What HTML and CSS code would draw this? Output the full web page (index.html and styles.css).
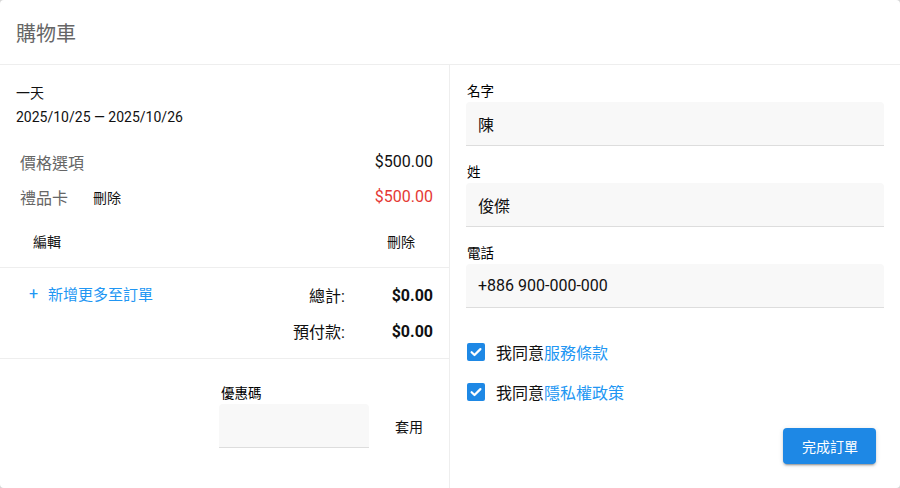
FILE: index.html
```html
<!DOCTYPE html>
<html lang="zh-Hant">
<head>
    <meta charset="UTF-8">
    <meta name="viewport" content="width=device-width, initial-scale=1.0">
    <title>購物車</title>
    <link rel="stylesheet" href="styles.css">
</head>
<body>
    <div class="cart">
        <header class="cart-header">購物車</header>
        <div class="cart-body">
            <section class="order">
                <div class="order-summary">
                    <p class="order-title">一天</p>
                    <p class="order-dates">2025/10/25 — 2025/10/26</p>
                    <div class="line">
                        <span class="line-name">價格選項</span>
                        <span class="line-price">$500.00</span>
                    </div>
                    <div class="line">
                        <span class="line-name">禮品卡</span>
                        <a href="#" class="line-remove">刪除</a>
                        <span class="line-price discount">$500.00</span>
                    </div>
                    <div class="order-actions">
                        <button class="text-btn">編輯</button>
                        <button class="text-btn">刪除</button>
                    </div>
                </div>
                <div class="order-totals">
                    <a href="#" class="add-more"><span class="plus">+</span>新增更多至訂單</a>
                    <div class="totals">
                        <span class="totals-label">總計:</span>
                        <span class="totals-value">$0.00</span>
                        <span class="totals-label">預付款:</span>
                        <span class="totals-value">$0.00</span>
                    </div>
                </div>
                <div class="coupon">
                    <label class="coupon-field">
                        <span class="field-label">優惠碼</span>
                        <input type="text" class="input coupon-input">
                    </label>
                    <button class="text-btn">套用</button>
                </div>
            </section>
            <section class="customer">
                <label class="field">
                    <span class="field-label">名字</span>
                    <input type="text" class="input" value="陳">
                </label>
                <label class="field">
                    <span class="field-label">姓</span>
                    <input type="text" class="input" value="俊傑">
                </label>
                <label class="field">
                    <span class="field-label">電話</span>
                    <input type="text" class="input" value="+886 900-000-000">
                </label>
                <div class="agreements">
                    <label class="check">
                        <span class="check-box">
                            <svg viewBox="0 0 18 18" width="18" height="18"><path d="M4.6 9.2l2.9 2.8 5.9-5.9" fill="none" stroke="#fff" stroke-width="2.2" stroke-linecap="round" stroke-linejoin="round"/></svg>
                        </span>
                        我同意<a href="#">服務條款</a>
                    </label>
                    <label class="check">
                        <span class="check-box">
                            <svg viewBox="0 0 18 18" width="18" height="18"><path d="M4.6 9.2l2.9 2.8 5.9-5.9" fill="none" stroke="#fff" stroke-width="2.2" stroke-linecap="round" stroke-linejoin="round"/></svg>
                        </span>
                        我同意<a href="#">隱私權政策</a>
                    </label>
                </div>
                <div class="submit-row">
                    <button class="submit">完成訂單</button>
                </div>
            </section>
        </div>
    </div>
</body>
</html>
```

FILE: styles.css
```css
html {
    box-sizing: border-box;
    font-family: Roboto, "Noto Sans CJK TC", sans-serif;
    font-size: 14px;
}

*,
*:before,
*:after {
    box-sizing: inherit;
}

body {
    margin: 0;
    height: 100vh;
    background-color: #d6d6d6;
    color: #111;
}

p {
    margin: 0;
}

a {
    color: #2196f3;
    text-decoration: none;
}

button {
    font-family: inherit;
    border: 0;
    background: none;
    cursor: pointer;
}

.cart {
    height: 100%;
    display: flex;
    flex-direction: column;
    background-color: #fff;
    border-radius: 4px;
    overflow: hidden;
}

.cart-header {
    height: 65px;
    flex-shrink: 0;
    display: flex;
    align-items: center;
    padding: 0 16px;
    font-size: 20px;
    color: #666;
    border-bottom: 1px solid #eee;
}

.cart-body {
    flex-grow: 1;
    display: flex;
}

.order {
    width: 450px;
    border-right: 1px solid #eee;
}

.order-summary {
    padding: 16px 16px 8px;
    border-bottom: 1px solid #eee;
}

.order-title,
.order-dates {
    line-height: 24px;
    font-size: 14px;
}

.line {
    display: flex;
    align-items: center;
    height: 35px;
    padding-left: 4px;
    font-size: 16px;
}

.line:first-of-type {
    margin-top: 15px;
}

.line-name {
    color: #666;
}

.line-remove {
    color: #111;
    font-size: 14px;
    margin-left: 25px;
}

.line-price {
    margin-left: auto;
}

.discount {
    color: #e53935;
}

.order-actions {
    display: flex;
    justify-content: space-between;
    margin-top: 9px;
    padding: 0 2px 0 1px;
}

.text-btn {
    height: 36px;
    padding: 0 16px;
    font-size: 14px;
    color: #111;
}

.order-totals {
    display: flex;
    justify-content: space-between;
    padding: 9px 16px;
    border-bottom: 1px solid #eee;
}

.add-more {
    height: 36px;
    display: flex;
    align-items: center;
    padding-left: 13px;
    font-size: 15px;
    margin-top: -2px;
}

.plus {
    font-size: 16px;
    margin-right: 10px;
}

.totals {
    display: grid;
    grid-template-columns: auto 88px;
    grid-auto-rows: 36px;
    align-items: center;
    font-size: 16px;
}

.totals-label {
    text-align: right;
}

.totals-value {
    text-align: right;
    font-weight: 700;
}

.coupon {
    display: flex;
    justify-content: flex-end;
    align-items: flex-end;
    gap: 16px;
    padding: 24px 16px 0;
}

.coupon .text-btn {
    height: 44px;
    padding: 0 10px;
}

.coupon-field {
    display: flex;
    flex-direction: column;
}

.field-label {
    line-height: 20px;
    font-size: 13.5px;
    color: #000;
    padding-left: 2px;
    margin-bottom: 1px;
}

.input {
    height: 44px;
    border: 0;
    border-bottom: 1px solid #ddd;
    border-radius: 4px 4px 0 0;
    background-color: #f8f8f8;
    padding: 0 12px;
    font-family: inherit;
    font-size: 16px;
    color: #111;
    outline: none;
}

.coupon-input {
    width: 150px;
}

.customer {
    flex-grow: 1;
    padding: 16px;
}

.field {
    display: flex;
    flex-direction: column;
    margin-bottom: 16px;
}

.field .field-label {
    padding-left: 1px;
}

.agreements {
    margin-top: 24px;
}

.check {
    display: flex;
    align-items: center;
    height: 40px;
    font-size: 16px;
}

.check-box {
    width: 18px;
    height: 18px;
    margin: 0 11px 0 1px;
    border-radius: 2px;
    background-color: #1e88e5;
    display: flex;
}

.submit-row {
    display: flex;
    justify-content: flex-end;
    margin-top: 16px;
    padding-right: 8px;
}

.submit {
    height: 36px;
    padding: 0 18px 0 19px;
    border-radius: 4px;
    background-color: #1e88e5;
    color: #fff;
    font-size: 14px;
    box-shadow: 0 3px 1px -2px rgba(0, 0, 0, .2), 0 2px 2px 0 rgba(0, 0, 0, .14), 0 1px 5px 0 rgba(0, 0, 0, .12);
}
```
